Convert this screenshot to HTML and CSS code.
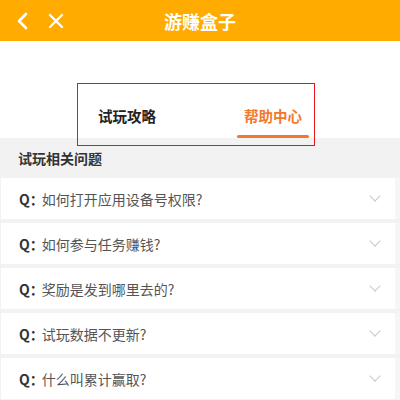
FILE: index.html
```html
<!DOCTYPE html>
<html lang="zh-CN">
<head>
  <meta charset="UTF-8" />
  <meta name="viewport" content="width=device-width, initial-scale=1.0"/>
  <title>游赚盒子</title>
  <link rel="stylesheet" href="styles.css">
</head>
<body>

<div class="topbar">
  <div class="topbar-icons">
    <svg width="14" height="18" viewBox="0 0 14 18"><path d="M10 2 L3 9 L10 16" fill="none" stroke="#fff" stroke-width="2.6" stroke-linecap="round" stroke-linejoin="round"/></svg>
    <svg width="16" height="16" viewBox="0 0 16 16"><path d="M2 2 L14 14 M14 2 L2 14" fill="none" stroke="#fff" stroke-width="2.4" stroke-linecap="round"/></svg>
  </div>
  <h1>游赚盒子</h1>
</div>

<div class="tabs-wrap">
  <div class="tabs">
    <div class="tab">试玩攻略</div>
    <div class="tab active">帮助中心</div>
  </div>
</div>

<div class="section-title">试玩相关问题</div>

<ul class="faq">
  <li><span class="q">Q：</span><span class="text">如何打开应用设备号权限?</span><i class="arrow"></i></li>
  <li><span class="q">Q：</span><span class="text">如何参与任务赚钱?</span><i class="arrow"></i></li>
  <li><span class="q">Q：</span><span class="text">奖励是发到哪里去的?</span><i class="arrow"></i></li>
  <li><span class="q">Q：</span><span class="text">试玩数据不更新?</span><i class="arrow"></i></li>
  <li><span class="q">Q：</span><span class="text">什么叫累计赢取?</span><i class="arrow"></i></li>
</ul>

</body>
</html>
```

FILE: styles.css
```css
body {
  margin: 0;
  padding: 0;
  font-family: "Noto Sans CJK SC", "Noto Sans", sans-serif;
  background-color: #f2f2f2;
}
.topbar {
  position: relative;
  height: 41px;
  background-color: #ffab00;
  display: flex;
  align-items: center;
  justify-content: center;
}
.topbar h1 {
  margin: 0;
  color: #fff;
  font-size: 18px;
  font-weight: bold;
}
.topbar-icons {
  position: absolute;
  left: 16px;
  top: 12px;
  display: flex;
  align-items: center;
  gap: 18px;
}
.tabs-wrap {
  background: #fff;
  height: 97px;
  display: flex;
  align-items: flex-start;
  justify-content: center;
}
.tabs {
  margin-top: 42px;
  margin-left: -8px;
  width: 238px;
  height: 63px;
  border: 1px solid #e8141c;
  box-sizing: border-box;
  display: flex;
  justify-content: space-between;
  padding: 0 5px 0 20px;
  position: relative;
  z-index: 1;
}
.tab {
  font-size: 14.5px;
  font-weight: bold;
  color: #222;
  padding-top: 21px;
  height: 100%;
  box-sizing: border-box;
}
.tab.active {
  color: #f2792c;
  padding-left: 7px;
  padding-right: 7px;
  position: relative;
}
.tab.active::after {
  content: "";
  position: absolute;
  left: 0;
  right: 0;
  top: 51px;
  height: 3px;
  border-radius: 2px;
  background: #f2792c;
}
.section-title {
  height: 40px;
  display: flex;
  align-items: center;
  padding: 0 18px;
  box-sizing: border-box;
  font-size: 14px;
  font-weight: bold;
  color: #333;
}
.faq {
  list-style: none;
  margin: 0;
  padding: 0;
}
.faq li {
  height: 41px;
  margin-bottom: 4px;
  background: #fff;
  display: flex;
  align-items: center;
  padding: 0 18px;
  font-size: 14px;
  border-left: 1px solid #f2f2f2;
  border-right: 5px solid #f6f6f6;
}
.faq .q {
  font-weight: bold;
  color: #333;
}
.faq .text {
  color: #555;
  flex: 1;
  margin-left: -2px;
}
.faq .arrow {
  width: 7px;
  height: 7px;
  border-right: 1.3px solid #c8c8c8;
  border-bottom: 1.3px solid #c8c8c8;
  transform: rotate(45deg);
  margin-top: -5px;
  margin-right: -2px;
}
```
